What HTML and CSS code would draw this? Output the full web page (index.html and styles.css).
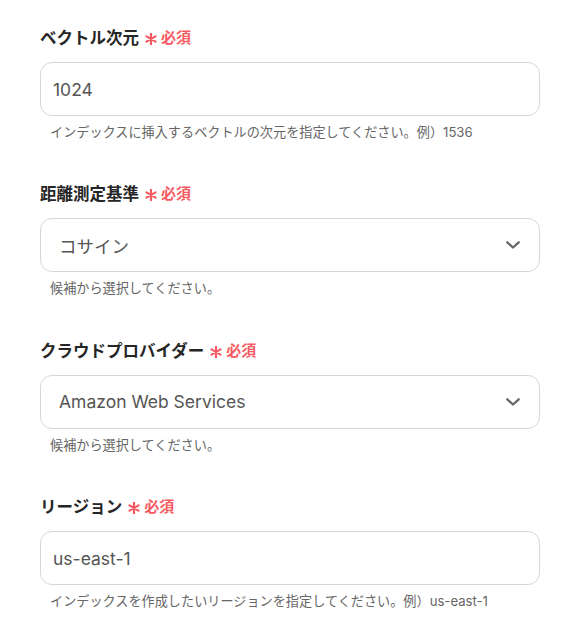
FILE: index.html
```html
<!DOCTYPE html>
<html lang="ja">
<head>
<meta charset="utf-8">
<link rel="stylesheet" href="styles.css">
</head>
<body>
<div class="form">
  <div class="field">
    <div class="label">ベクトル次元<span class="req"><svg class="ast" width="12" height="12" viewBox="0 0 12 12"><path d="M6 0.8V11.2M1.5 3.4L10.5 8.6M10.5 3.4L1.5 8.6" stroke="#f55a62" stroke-width="2.2" stroke-linecap="round"/></svg>必須</span></div>
    <div class="input">1024</div>
    <div class="hint">インデックスに挿入するベクトルの次元を指定してください。例）1536</div>
  </div>
  <div class="field">
    <div class="label">距離測定基準<span class="req"><svg class="ast" width="12" height="12" viewBox="0 0 12 12"><path d="M6 0.8V11.2M1.5 3.4L10.5 8.6M10.5 3.4L1.5 8.6" stroke="#f55a62" stroke-width="2.2" stroke-linecap="round"/></svg>必須</span></div>
    <div class="input select"><span>コサイン</span>
      <svg class="chev" width="14" height="8" viewBox="0 0 14 8"><path d="M1.3 1.3 L7 6.5 L12.7 1.3" fill="none" stroke="#666" stroke-width="2.3" stroke-linecap="round" stroke-linejoin="round"/></svg>
    </div>
    <div class="hint">候補から選択してください。</div>
  </div>
  <div class="field">
    <div class="label">クラウドプロバイダー<span class="req"><svg class="ast" width="12" height="12" viewBox="0 0 12 12"><path d="M6 0.8V11.2M1.5 3.4L10.5 8.6M10.5 3.4L1.5 8.6" stroke="#f55a62" stroke-width="2.2" stroke-linecap="round"/></svg>必須</span></div>
    <div class="input select"><span>Amazon Web Services</span>
      <svg class="chev" width="14" height="8" viewBox="0 0 14 8"><path d="M1.3 1.3 L7 6.5 L12.7 1.3" fill="none" stroke="#666" stroke-width="2.3" stroke-linecap="round" stroke-linejoin="round"/></svg>
    </div>
    <div class="hint">候補から選択してください。</div>
  </div>
  <div class="field">
    <div class="label">リージョン<span class="req"><svg class="ast" width="12" height="12" viewBox="0 0 12 12"><path d="M6 0.8V11.2M1.5 3.4L10.5 8.6M10.5 3.4L1.5 8.6" stroke="#f55a62" stroke-width="2.2" stroke-linecap="round"/></svg>必須</span></div>
    <div class="input">us-east-1</div>
    <div class="hint">インデックスを作成したいリージョンを指定してください。例）us-east-1</div>
  </div>
</div>
</body>
</html>
```
FILE: styles.css
```css
html, body { margin: 0; padding: 0; background: #fff; }
body {
  font-family: Inter, "Noto Sans CJK JP", sans-serif;
  color: #333;
}
.form {
  padding: 26px 44px 0 40px;
  display: flex;
  flex-direction: column;
  gap: 40.4px;
}
.field { display: flex; flex-direction: column; }
.label {
  font-size: 16.5px;
  font-weight: 700;
  line-height: 24px;
  color: #262626;
  display: flex;
  align-items: center;
}
.req {
  color: #f55a62;
  font-size: 15px;
  font-weight: 700;
  margin-left: 6px;
  display: inline-flex;
  align-items: center;
}
.ast { margin-right: 4px; position: relative; top: 1px; }
.input {
  margin-top: 12px;
  height: 54px;
  box-sizing: border-box;
  border: 1px solid #d6d6de;
  border-radius: 12px;
  padding: 0 12px;
  display: flex;
  align-items: center;
  font-size: 17.5px;
  color: #555;
}
.select { padding: 0 19px 0 18px; justify-content: space-between; }
.hint {
  margin-top: 6px;
  padding-left: 10px;
  font-size: 13.15px;
  line-height: 20px;
  color: #666;
}
```
